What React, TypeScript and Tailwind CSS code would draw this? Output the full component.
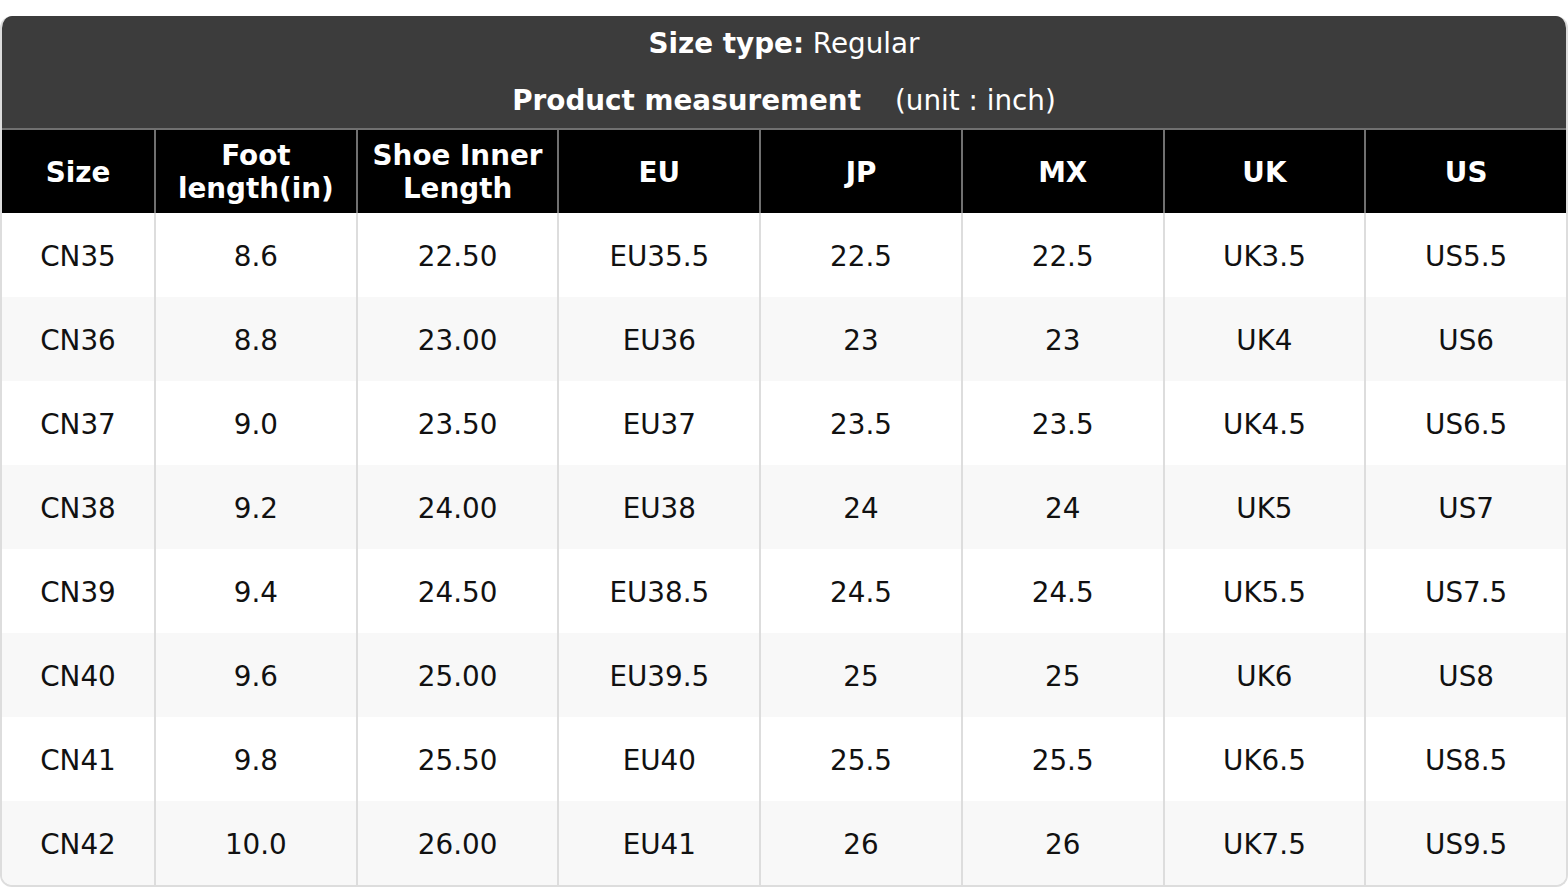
import React from 'react';

const columns = ['Size', 'Foot\nlength(in)', 'Shoe Inner\nLength', 'EU', 'JP', 'MX', 'UK', 'US'];

const rows = [
  ['CN35', '8.6', '22.50', 'EU35.5', '22.5', '22.5', 'UK3.5', 'US5.5'],
  ['CN36', '8.8', '23.00', 'EU36', '23', '23', 'UK4', 'US6'],
  ['CN37', '9.0', '23.50', 'EU37', '23.5', '23.5', 'UK4.5', 'US6.5'],
  ['CN38', '9.2', '24.00', 'EU38', '24', '24', 'UK5', 'US7'],
  ['CN39', '9.4', '24.50', 'EU38.5', '24.5', '24.5', 'UK5.5', 'US7.5'],
  ['CN40', '9.6', '25.00', 'EU39.5', '25', '25', 'UK6', 'US8'],
  ['CN41', '9.8', '25.50', 'EU40', '25.5', '25.5', 'UK6.5', 'US8.5'],
  ['CN42', '10.0', '26.00', 'EU41', '26', '26', 'UK7.5', 'US9.5'],
];

const App: React.FC = () => {
  return (
    <div className="bg-white min-h-screen pt-4 font-['DejaVu_Sans',sans-serif] text-[27.8px]">
      <div className="rounded-[12px] overflow-hidden border-x-2 border-b-2 border-[#dddddd]">
        {/* Title block */}
        <div className="bg-[#3c3c3c] text-white text-center pt-[8px] pb-[7px] leading-[40px]">
          <div>
            <span className="font-bold">Size type:</span> Regular
          </div>
          <div className="mt-[17px]">
            <span className="font-bold">Product measurement</span>
            <span className="ml-[34px]">(unit : inch)</span>
          </div>
        </div>

        {/* Table head */}
        <div className="grid grid-cols-[152px_repeat(7,1fr)] bg-black text-white font-bold border-t-2 border-[#707070] leading-[33px]">
          {columns.map((c, i) => (
            <div
              key={c}
              className={`h-[83px] pt-[1px] flex items-center justify-center text-center whitespace-pre-line ${i > 0 ? 'border-l-2 border-[#707070]' : ''}`}
            >
              {c}
            </div>
          ))}
        </div>

        {/* Body */}
        {rows.map((r, ri) => (
          <div
            key={r[0]}
            className={`grid grid-cols-[152px_repeat(7,1fr)] text-[#111111] ${ri % 2 === 1 ? 'bg-[#f8f8f8]' : 'bg-white'}`}
          >
            {r.map((v, i) => (
              <div
                key={i}
                className={`h-[84px] pt-[3px] flex items-center justify-center ${i > 0 ? 'border-l-2 border-[#dddddd]' : ''}`}
              >
                {v}
              </div>
            ))}
          </div>
        ))}
      </div>
    </div>
  );
};

export default App;
